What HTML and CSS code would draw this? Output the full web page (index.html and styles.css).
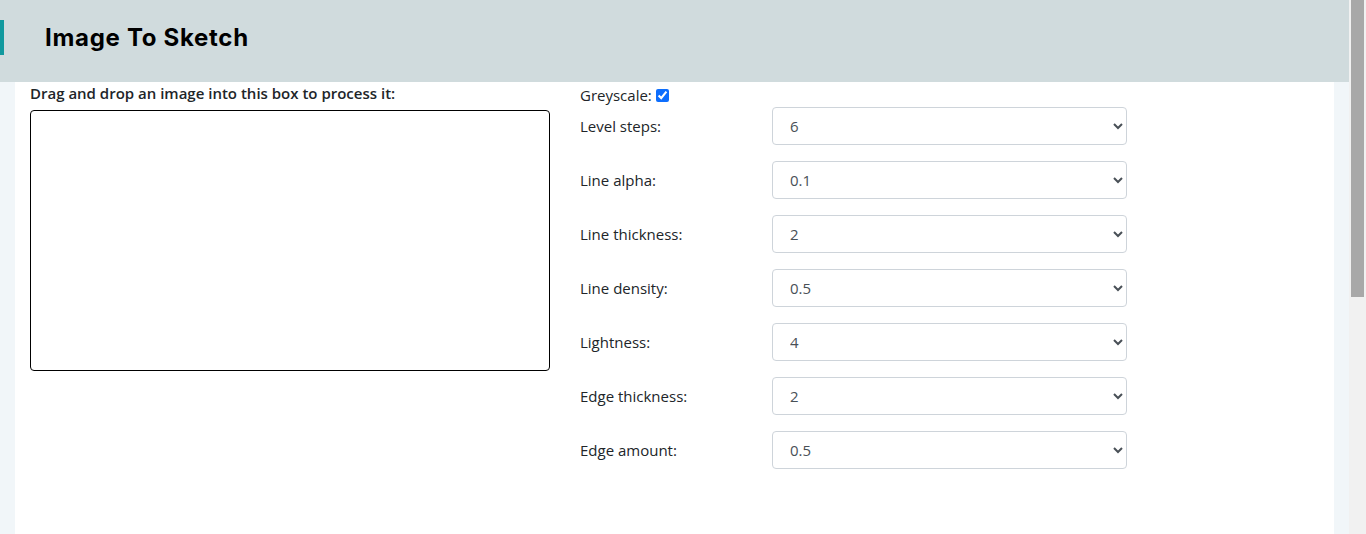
FILE: index.html
```html
<!DOCTYPE html>
<html lang="en">
<head>
  <meta charset="UTF-8">
  <meta name="viewport" content="width=device-width, initial-scale=1.0">
  <title>Image To Sketch</title>
  <link rel="stylesheet" href="styles.css">
</head>
<body>
  <header class="topbar">
    <span class="accent"></span>
    <h1>Image To Sketch</h1>
  </header>

  <main class="page">
    <section class="drop-col">
      <p class="drop-label">Drag and drop an image into this box to process it:</p>
      <div id="dropZone" class="drop-zone"></div>
    </section>

    <section class="options">
      <div class="check-row">
        <label for="greyscale">Greyscale:</label>
        <input type="checkbox" id="greyscale" checked>
      </div>

      <div class="opt-row">
        <label for="levelSteps">Level steps:</label>
        <select id="levelSteps" class="form-select">
          <option>2</option><option>4</option><option selected>6</option><option>8</option>
        </select>
      </div>

      <div class="opt-row">
        <label for="lineAlpha">Line alpha:</label>
        <select id="lineAlpha" class="form-select">
          <option selected>0.1</option><option>0.2</option><option>0.3</option>
        </select>
      </div>

      <div class="opt-row">
        <label for="lineThickness">Line thickness:</label>
        <select id="lineThickness" class="form-select">
          <option>1</option><option selected>2</option><option>3</option>
        </select>
      </div>

      <div class="opt-row">
        <label for="lineDensity">Line density:</label>
        <select id="lineDensity" class="form-select">
          <option>0.25</option><option selected>0.5</option><option>1</option>
        </select>
      </div>

      <div class="opt-row">
        <label for="lightness">Lightness:</label>
        <select id="lightness" class="form-select">
          <option>2</option><option selected>4</option><option>6</option>
        </select>
      </div>

      <div class="opt-row">
        <label for="edgeThickness">Edge thickness:</label>
        <select id="edgeThickness" class="form-select">
          <option>1</option><option selected>2</option><option>3</option>
        </select>
      </div>

      <div class="opt-row">
        <label for="edgeAmount">Edge amount:</label>
        <select id="edgeAmount" class="form-select">
          <option>0.25</option><option selected>0.5</option><option>1</option>
        </select>
      </div>
    </section>
  </main>

  <!-- window scrollbar, drawn since the headless shot hides the real one -->
  <div class="fake-scroll"><div class="thumb"></div></div>
</body>
</html>
```

FILE: styles.css
```css
:root {
  --page-bg: #f1f6f9;
  --header-bg: #d0dbdd;
  --accent: #11999e;
  --text: #212529;
  --input-text: #495057;
  --input-border: #ced4da;
}

html, body {
  margin: 0;
}

body {
  font-family: "Open Sans", "Noto Sans", "Liberation Sans", sans-serif;
  font-size: 15px;
  color: var(--text);
  background: var(--page-bg);
  padding-right: 17px;
}

.topbar {
  position: relative;
  height: 82px;
  background: var(--header-bg);
  display: flex;
  align-items: center;
}

.accent {
  position: absolute;
  left: 0;
  top: 20px;
  width: 4px;
  height: 35px;
  background: var(--accent);
}

.topbar h1 {
  margin: 0 0 7px 45px;
  font-family: Inter, "Open Sans", sans-serif;
  font-size: 24px;
  font-weight: 700;
  letter-spacing: 0.7px;
  color: #000;
}

.page {
  margin: 0 15px;
  min-height: 880px;
  background: #fff;
  display: flex;
  gap: 30px;
  padding: 1px 15px 0;
}

.drop-col {
  width: 520px;
}

.drop-label {
  margin: 0 0 6px;
  font-weight: 600;
  line-height: 21px;
}

.drop-zone {
  height: 259px;
  border: 1px solid #000;
  border-radius: 4px;
}

.options {
  width: 547px;
}

.check-row {
  display: flex;
  align-items: center;
  gap: 4px;
  height: 24px;
}

.check-row input {
  margin: 0;
  width: 13px;
  height: 13px;
  accent-color: #0d6efd;
}

.opt-row {
  display: flex;
  align-items: center;
  margin-bottom: 16px;
}

.opt-row label {
  width: 192px;
}

.form-select {
  width: 355px;
  height: 38px;
  padding: 0 12px 0 13px;
  font-family: inherit;
  font-size: 15px;
  color: var(--input-text);
  background: #fff;
  border: 1px solid var(--input-border);
  border-radius: 4px;
  outline: none;
}

.fake-scroll {
  position: fixed;
  top: 0;
  right: 0;
  width: 17px;
  height: 100vh;
  background: #f1f1f1;
}

.fake-scroll .thumb {
  margin-left: 2px;
  width: 13px;
  height: 297px;
  background: #a8a8a8;
}
```
